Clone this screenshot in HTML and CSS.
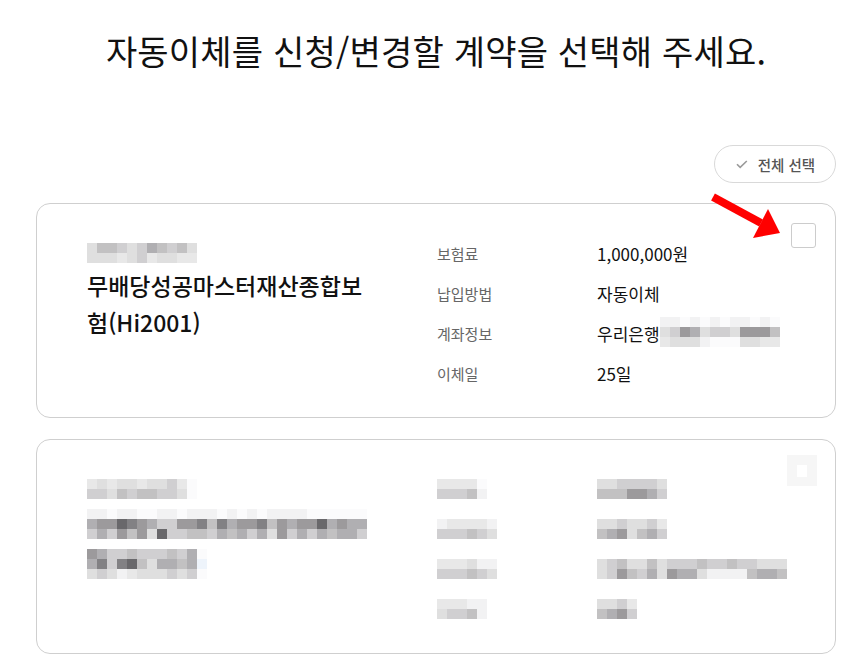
FILE: index.html
```html
<!DOCTYPE html>
<html lang="ko">
<head>
<meta charset="utf-8">
<title>자동이체 계약 선택</title>
<link rel="stylesheet" href="styles.css">
</head>
<body>
<div class="page">
  <h1 class="title">자동이체를 신청/변경할 계약을 선택해 주세요.</h1>

  <div class="toolbar">
    <button class="select-all" type="button">
      <svg class="check" width="12" height="9" viewBox="0 0 12 9"><path d="M1 4.2 L4.2 7.4 L10.8 1" fill="none" stroke="#9a9a9a" stroke-width="1.6"/></svg>
      <span>전체 선택</span>
    </button>
  </div>

  <div class="list">
    <div class="card">
      <div class="left">
        <div class="pix n11 blur-top">
          <i class="c"></i><i class="e"></i><i class="e"></i><i class="d"></i><i class="c"></i><i class="d"></i><i class="f"></i><i class="e"></i><i class="d"></i><i class="e"></i><i class="c"></i>
          <i class="c"></i><i class="c"></i><i class="c"></i><i class="b"></i><i class="c"></i><i class="d"></i><i class="b"></i><i class="c"></i><i class="c"></i><i class="b"></i><i class="b"></i>
        </div>
        <div class="product">무배당성공마스터재산종합보험(Hi2001)</div>
      </div>
      <dl class="info">
        <div class="row"><dt>보험료</dt><dd>1,000,000원</dd></div>
        <div class="row"><dt>납입방법</dt><dd>자동이체</dd></div>
        <div class="row"><dt>계좌정보</dt><dd>우리은행<span class="pix n12 acct">
          <i class="a"></i><i class="a"></i><i class="w"></i><i class="a"></i><i class="w"></i><i class="a"></i><i class="w"></i><i class="a"></i><i class="a"></i><i class="w"></i><i class="a"></i><i class="w"></i>
          <i class="c"></i><i class="d"></i><i class="g"></i><i class="f"></i><i class="c"></i><i class="d"></i><i class="d"></i><i class="c"></i><i class="g"></i><i class="g"></i><i class="g"></i><i class="e"></i>
          <i class="b"></i><i class="c"></i><i class="c"></i><i class="c"></i><i class="a"></i><i class="w"></i><i class="w"></i><i class="w"></i><i class="c"></i><i class="c"></i><i class="b"></i><i class="b"></i>
        </span></dd></div>
        <div class="row"><dt>이체일</dt><dd>25일</dd></div>
      </dl>
      <span class="checkbox"></span>
      <svg class="arrow" width="90" height="60" viewBox="0 0 90 60">
        <path d="M12 11 L60 37" stroke="#ff0000" stroke-width="8" stroke-linecap="butt"/>
        <polygon points="67,23 52,52 79,47" fill="#ff0000"/>
      </svg>
    </div>

    <div class="card">
      <div class="left">
        <div class="pix n11 blur-top">
          <i class="b"></i><i class="c"></i><i class="b"></i><i class="c"></i><i class="c"></i><i class="b"></i><i class="c"></i><i class="c"></i><i class="d"></i><i class="b"></i><i class="w"></i>
          <i class="d"></i><i class="d"></i><i class="c"></i><i class="e"></i><i class="d"></i><i class="e"></i><i class="e"></i><i class="d"></i><i class="d"></i><i class="c"></i><i class="w"></i>
        </div>
        <div class="pix n28 blur-name">
          <i class="a"></i><i class="a"></i><i class="w"></i><i class="a"></i><i class="a"></i><i class="w"></i><i class="w"></i><i class="a"></i><i class="a"></i><i class="w"></i><i class="a"></i><i class="a"></i><i class="a"></i><i class="w"></i><i class="a"></i><i class="w"></i><i class="a"></i><i class="w"></i><i class="a"></i><i class="a"></i><i class="a"></i><i class="a"></i><i class="w"></i><i class="w"></i><i class="w"></i><i class="w"></i><i class="w"></i><i class="w"></i>
          <i class="f"></i><i class="g"></i><i class="g"></i><i class="k"></i><i class="h"></i><i class="g"></i><i class="f"></i><i class="d"></i><i class="d"></i><i class="g"></i><i class="g"></i><i class="h"></i><i class="e"></i><i class="h"></i><i class="f"></i><i class="g"></i><i class="g"></i><i class="h"></i><i class="e"></i><i class="g"></i><i class="f"></i><i class="g"></i><i class="g"></i><i class="k"></i><i class="f"></i><i class="g"></i><i class="f"></i><i class="f"></i>
          <i class="d"></i><i class="f"></i><i class="d"></i><i class="g"></i><i class="e"></i><i class="g"></i><i class="c"></i><i class="k"></i><i class="d"></i><i class="d"></i><i class="e"></i><i class="e"></i><i class="d"></i><i class="f"></i><i class="e"></i><i class="f"></i><i class="d"></i><i class="f"></i><i class="c"></i><i class="g"></i><i class="d"></i><i class="f"></i><i class="d"></i><i class="f"></i><i class="e"></i><i class="f"></i><i class="f"></i><i class="d"></i>
        </div>
        <div class="pix n12 blur-name2">
          <i class="g"></i><i class="f"></i><i class="d"></i><i class="d"></i><i class="e"></i><i class="d"></i><i class="d"></i><i class="d"></i><i class="e"></i><i class="d"></i><i class="f"></i><i class="w"></i>
          <i class="f"></i><i class="h"></i><i class="d"></i><i class="h"></i><i class="k"></i><i class="e"></i><i class="c"></i><i class="f"></i><i class="f"></i><i class="e"></i><i class="f"></i><i class="l"></i>
          <i class="c"></i><i class="d"></i><i class="c"></i><i class="a"></i><i class="b"></i><i class="c"></i><i class="c"></i><i class="c"></i><i class="d"></i><i class="c"></i><i class="d"></i><i class="w"></i>
        </div>
      </div>
      <dl class="info">
        <div class="row"><span class="pix n5">
          <i class="b"></i><i class="b"></i><i class="b"></i><i class="b"></i><i class="w"></i>
          <i class="d"></i><i class="d"></i><i class="d"></i><i class="e"></i><i class="a"></i>
        </span><span class="pix n7">
          <i class="c"></i><i class="c"></i><i class="d"></i><i class="d"></i><i class="d"></i><i class="d"></i><i class="c"></i>
          <i class="e"></i><i class="e"></i><i class="e"></i><i class="g"></i><i class="g"></i><i class="f"></i><i class="d"></i>
        </span></div>
        <div class="row"><span class="pix n6">
          <i class="a"></i><i class="b"></i><i class="b"></i><i class="b"></i><i class="b"></i><i class="a"></i>
          <i class="d"></i><i class="d"></i><i class="d"></i><i class="e"></i><i class="d"></i><i class="c"></i>
        </span><span class="pix n7">
          <i class="c"></i><i class="c"></i><i class="d"></i><i class="c"></i><i class="c"></i><i class="d"></i><i class="b"></i>
          <i class="e"></i><i class="f"></i><i class="g"></i><i class="c"></i><i class="e"></i><i class="f"></i><i class="d"></i>
        </span></div>
        <div class="row"><span class="pix n6">
          <i class="b"></i><i class="b"></i><i class="b"></i><i class="c"></i><i class="a"></i><i class="a"></i>
          <i class="d"></i><i class="d"></i><i class="d"></i><i class="e"></i><i class="d"></i><i class="c"></i>
        </span><span class="pix n19">
          <i class="c"></i><i class="d"></i><i class="e"></i><i class="c"></i><i class="c"></i><i class="e"></i><i class="c"></i><i class="d"></i><i class="d"></i><i class="d"></i><i class="e"></i><i class="d"></i><i class="d"></i><i class="e"></i><i class="d"></i><i class="d"></i><i class="c"></i><i class="c"></i><i class="c"></i>
          <i class="c"></i><i class="d"></i><i class="g"></i><i class="e"></i><i class="d"></i><i class="f"></i><i class="c"></i><i class="g"></i><i class="f"></i><i class="f"></i><i class="c"></i><i class="a"></i><i class="a"></i><i class="a"></i><i class="a"></i><i class="e"></i><i class="f"></i><i class="f"></i><i class="e"></i>
        </span></div>
        <div class="row"><span class="pix n5">
          <i class="b"></i><i class="b"></i><i class="b"></i><i class="a"></i><i class="a"></i>
          <i class="c"></i><i class="d"></i><i class="d"></i><i class="e"></i><i class="a"></i>
        </span><span class="pix n4">
          <i class="c"></i><i class="c"></i><i class="d"></i><i class="b"></i>
          <i class="e"></i><i class="f"></i><i class="g"></i><i class="d"></i>
        </span></div>
      </dl>
      <span class="checkbox ghost"><span class="ghost-in"></span></span>
    </div>
  </div>
</div>
</body>
</html>
```

FILE: styles.css
```css
* { box-sizing: border-box; }

body {
  margin: 0;
  background: #ffffff;
  color: #111111;
  font-family: "Noto Sans CJK KR", "Noto Sans", sans-serif;
}

.page {
  width: 800px;
  margin-left: 36px;
}

.title {
  margin: 0;
  padding-top: 26px;
  font-size: 34px;
  font-weight: 400;
  line-height: 50px;
  text-align: center;
  color: #111111;
  letter-spacing: 0.2px;
}

.toolbar {
  display: flex;
  justify-content: flex-end;
  margin-top: 69px;
}

.select-all {
  display: flex;
  align-items: center;
  justify-content: center;
  gap: 10px;
  width: 122px;
  height: 38px;
  padding: 0 0 0 1px;
  border: 1px solid #d9d9d9;
  border-radius: 19px;
  background: #ffffff;
  font-family: inherit;
  font-size: 14.5px;
  font-weight: 500;
  color: #555555;
  cursor: pointer;
}

.check { display: block; }

.list {
  display: flex;
  flex-direction: column;
  gap: 21px;
  margin-top: 20px;
}

.card {
  position: relative;
  display: grid;
  grid-template-columns: 285px 1fr;
  column-gap: 65px;
  height: 215px;
  padding: 29px 50px 24px;
  border: 1px solid #cfcfcf;
  border-radius: 14px;
  background: #ffffff;
}

.left { display: flex; flex-direction: column; align-items: flex-start; }

.blur-top { margin-top: 10px; }

.product {
  margin-top: 4px;
  font-size: 23px;
  font-weight: 500;
  line-height: 37px;
  color: #111111;
}

.blur-name { margin-top: 10px; }
.blur-name2 { margin-top: 10px; }

.info { margin: 0; }

.row {
  display: grid;
  grid-template-columns: 160px 1fr;
  align-items: center;
  height: 40px;
}

.row dt {
  font-size: 15px;
  color: #666666;
}

.row dd {
  display: flex;
  align-items: center;
  margin: 0;
  font-size: 17px;
  color: #111111;
}

.acct { margin-top: -2px; }

.checkbox {
  position: absolute;
  top: 19px;
  right: 19px;
  width: 25px;
  height: 25px;
  border: 1px solid #cccccc;
  border-radius: 3px;
  background: #ffffff;
}

.checkbox.ghost {
  top: 15px;
  right: 18px;
  width: 30px;
  height: 31px;
  border: none;
  border-radius: 0;
  background: #f6f6f6;
  display: flex;
  align-items: center;
  justify-content: center;
}

.ghost-in {
  width: 10px;
  height: 12px;
  background: #ffffff;
}

.arrow {
  position: absolute;
  left: 664px;
  top: -18px;
}

/* pixelated (mosaic) blocks */
.pix {
  display: grid;
  grid-auto-rows: 10px;
}
.pix i { display: block; }
.n4 { grid-template-columns: repeat(4, 10px); }
.n5 { grid-template-columns: repeat(5, 10px); }
.n6 { grid-template-columns: repeat(6, 10px); }
.n7 { grid-template-columns: repeat(7, 10px); }
.n11 { grid-template-columns: repeat(11, 10px); }
.n12 { grid-template-columns: repeat(12, 10px); }
.n19 { grid-template-columns: repeat(19, 10px); }
.n28 { grid-template-columns: repeat(28, 10px); }

.w { background: #fbfbfc; }
.a { background: #f2f2f3; }
.b { background: #e8e8e8; }
.c { background: #dfdfdf; }
.d { background: #d0cfd1; }
.e { background: #c2c1c2; }
.f { background: #b0afb2; }
.g { background: #9c9a9c; }
.h { background: #828184; }
.k { background: #69686b; }
.l { background: #eef4fb; }
```
